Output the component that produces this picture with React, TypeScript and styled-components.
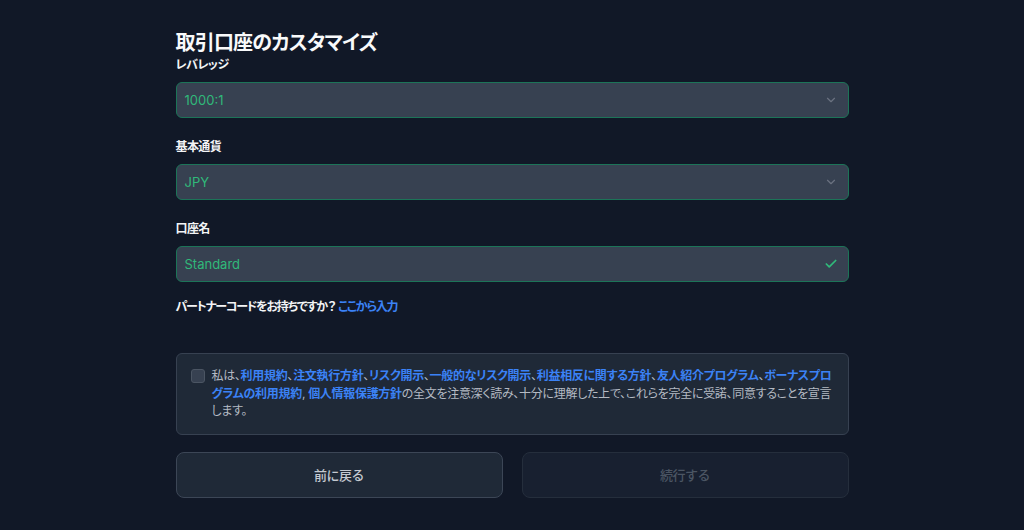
import React from "react";
import styled, { createGlobalStyle } from "styled-components";
import { ChevronDown, Check } from "lucide-react";

const GlobalStyle = createGlobalStyle`
  html, body {
    margin: 0;
    padding: 0;
    background: #111827;
  }
  body {
    font-family: Inter, "Noto Sans CJK JP", sans-serif;
    font-feature-settings: "palt";
    -webkit-font-smoothing: antialiased;
  }
`;

const Page = styled.main`
  min-height: 530px;
  display: flex;
  justify-content: center;
  padding-top: 29px;
  box-sizing: border-box;
`;

const Form = styled.div`
  width: 673px;
  display: flex;
  flex-direction: column;
`;

const Title = styled.h1`
  margin: 0;
  font-size: 20px;
  line-height: 28px;
  font-weight: 700;
  letter-spacing: -0.04em;
  color: #f9fafb;
`;

const Field = styled.div<{ $gap: number }>`
  display: flex;
  flex-direction: column;
  margin-top: ${(p) => p.$gap}px;
`;

const Label = styled.label`
  font-size: 12px;
  line-height: 16px;
  font-weight: 700;
  letter-spacing: -0.05em;
  color: #f3f4f6;
`;

const Control = styled.div`
  margin-top: 9px;
  height: 36px;
  box-sizing: border-box;
  display: flex;
  align-items: center;
  justify-content: space-between;
  padding: 0 10px 0 8px;
  background: #374151;
  border: 1px solid #1c7458;
  border-radius: 6px;
  font-size: 13px;
  color: #30b97a;
`;

const Trail = styled.span<{ $muted?: boolean }>`
  display: flex;
  color: ${(p) => (p.$muted ? "#6b7280" : "#30b97a")};
`;

const Partner = styled.p`
  margin: 17px 0 0;
  font-size: 12px;
  line-height: 16px;
  font-weight: 700;
  letter-spacing: -0.1em;
  color: #f3f4f6;
`;

const Question = styled.span`
  margin: 0 3px 0 1px;
`;

const Link = styled.a`
  color: #3b82f6;
  text-decoration: none;
  font-weight: 700;
`;

const Consent = styled.div`
  margin-top: 38px;
  display: flex;
  gap: 7px;
  padding: 13px 14px 14px 14px;
  background: #1f2937;
  border: 1px solid #374151;
  border-radius: 6px;
`;

const Box = styled.span`
  flex: none;
  width: 14px;
  height: 14px;
  margin-top: 2px;
  box-sizing: border-box;
  background: #374151;
  border: 1px solid #4b5563;
  border-radius: 3px;
`;

const ConsentText = styled.p`
  margin: 0;
  font-size: 12px;
  line-height: 17.5px;
  letter-spacing: -0.3px;
  color: #b4bac3;
`;

const Actions = styled.div`
  margin-top: 17px;
  display: grid;
  grid-template-columns: 1fr 1fr;
  gap: 19px;
`;

const Button = styled.button<{ $disabled?: boolean }>`
  height: 46px;
  border-radius: 8px;
  font-family: inherit;
  font-size: 13px;
  font-weight: 500;
  letter-spacing: -0.04em;
  background: ${(p) => (p.$disabled ? "#182030" : "#1f2937")};
  border: 1px solid ${(p) => (p.$disabled ? "#252e3c" : "#3c4656")};
  color: ${(p) => (p.$disabled ? "#4b5563" : "#c4c9d1")};
`;

const links = [
  "利用規約",
  "注文執行方針",
  "リスク開示",
  "一般的なリスク開示",
  "利益相反に関する方針",
  "友人紹介プログラム",
  "ボーナスプログラムの利用規約",
];

export default function App() {
  return (
    <>
      <GlobalStyle />
      <Page>
        <Form>
          <Title>取引口座のカスタマイズ</Title>
          <Field $gap={0}>
            <Label>レバレッジ</Label>
            <Control>
              1000:1
              <Trail $muted>
                <ChevronDown size={14} strokeWidth={2} />
              </Trail>
            </Control>
          </Field>
          <Field $gap={21}>
            <Label>基本通貨</Label>
            <Control>
              JPY
              <Trail $muted>
                <ChevronDown size={14} strokeWidth={2} />
              </Trail>
            </Control>
          </Field>
          <Field $gap={21}>
            <Label>口座名</Label>
            <Control>
              Standard
              <Trail>
                <Check size={14} strokeWidth={3} />
              </Trail>
            </Control>
          </Field>
          <Partner>
            パートナーコードをお持ちですか<Question>？</Question>
            <Link href="#">ここから入力</Link>
          </Partner>
          <Consent>
            <Box />
            <ConsentText>
              私は、
              {links.map((l, i) => (
                <React.Fragment key={l}>
                  <Link href="#">{l}</Link>
                  {i < links.length - 1 ? "、" : ", "}
                </React.Fragment>
              ))}
              <Link href="#">個人情報保護方針</Link>
              の全文を注意深く読み、十分に理解した上で、これらを完全に受諾、同意することを宣言します。
            </ConsentText>
          </Consent>
          <Actions>
            <Button>前に戻る</Button>
            <Button $disabled>続行する</Button>
          </Actions>
        </Form>
      </Page>
    </>
  );
}
